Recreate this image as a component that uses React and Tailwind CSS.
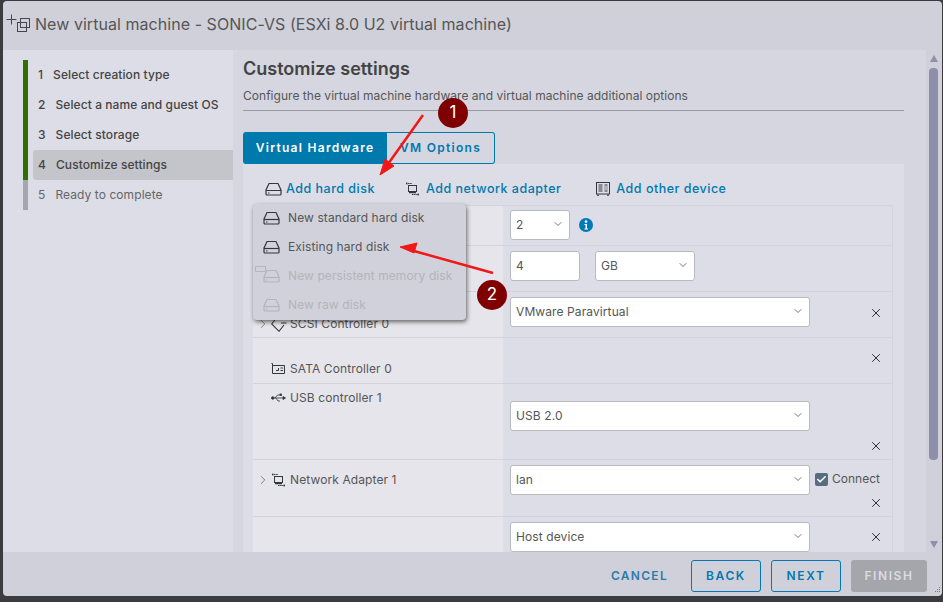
import React from 'react';
import { ChevronDown, ChevronRight, X, Check } from 'lucide-react';

const steps = [
  { n: 1, label: 'Select creation type', text: 'ml-[10px]' },
  { n: 2, label: 'Select a name and guest OS', text: 'ml-[10px]' },
  { n: 3, label: 'Select storage', text: 'ml-[10px]' },
  { n: 4, label: 'Customize settings', text: 'ml-[10px]', active: true },
  { n: 5, label: 'Ready to complete', text: 'ml-[10px]', todo: true },
];

function DiskIcon({ className = 'text-[#33363c]' }) {
  return (
    <svg width="17" height="14" viewBox="0 0 17 14" fill="none" stroke="currentColor" strokeWidth="1.2" className={`shrink-0 ${className}`}>
      <path d="M4 1.500h9l3 6.500v4a1 1 0 0 1-1 1H2a1 1 0 0 1-1-1V8z" />
      <path d="M1 8.500h15" />
      <path d="M3 11h1.500" />
    </svg>
  );
}

function NetIcon() {
  return (
    <svg width="15" height="14" viewBox="0 0 15 14" fill="none" stroke="#33363c" strokeWidth="1" className="shrink-0">
      <rect x="3.500" y="3.500" width="8" height="6" />
      <path d="M4 10.500h7" strokeWidth="1.500" />
      <path d="M1 1.500h6M1 1.500l1.500-1M1 1.500l1.500 1" strokeDasharray="1.500 0.600" />
      <path d="M7 12.500h7M14 12.500l-1.500-1M14 12.500l-1.500 1" strokeDasharray="1.500 0.600" />
    </svg>
  );
}

function OtherIcon() {
  return (
    <svg width="14" height="14" viewBox="0 0 14 14" fill="none" stroke="#33363c" strokeWidth="1" className="shrink-0">
      <rect x="0.500" y="0.500" width="13" height="11.500" />
      <path d="M2.500 3h4M2.500 5h4M2.500 7h4M2.500 9h4M8.500 3h3M8.500 5h1M10.500 5h1M8.500 7h1M10.500 7h1M8.500 9h3" />
      <path d="M2 12.500v1.500M12 12.500v1.500" strokeWidth="1.500" />
    </svg>
  );
}

function Select({ value, w = 'w-[300px]' }) {
  return (
    <div className={`${w} h-[30px] shrink-0 bg-white border border-[#b9b9c0] rounded-[3px] flex items-center justify-between pl-[5px] pr-[5px] text-[12px] tracking-[0.1px] text-[#565656]`}>
      <span>{value}</span>
      <ChevronDown size={12} strokeWidth={1.500} className="text-[#444] mb-[3px]" />
    </div>
  );
}

function Remove({ className = '' }) {
  return (
    <div className={`flex justify-end pr-[9px] ${className}`}>
      <X size={14} strokeWidth={1.600} className="text-[#222]" />
    </div>
  );
}

function Row({ h, label, control, side }) {
  return (
    <div className={`${h} flex border-b border-[#d2d3dc]`}>
      <div className="w-[251px] shrink-0 bg-[#e5e5eb] border-r border-[#dcdde6] text-[12px] tracking-[0.1px] text-[#565656]">{label}</div>
      <div className="flex-1 pl-[6px] flex">
        <div>{control}</div>
        <div className="flex-1">{side}</div>
      </div>
    </div>
  );
}

function DeviceLabel({ className, caret, icon, text }) {
  return (
    <div className={`flex items-center pl-[5px] ${className}`}>
      <span className="w-[9px] shrink-0">
        {caret && <ChevronRight size={14} strokeWidth={1.200} className="text-[#555] -ml-[2px]" />}
      </span>
      <span className="w-[23px] shrink-0 flex justify-center">{icon}</span>
      <span>{text}</span>
    </div>
  );
}

function MenuItem({ label, off, extra }) {
  return (
    <div className={`h-[29px] pb-[2px] flex items-center pl-[10px] gap-2 text-[12px] tracking-[0.1px] relative ${off ? 'text-[#b3b4bc]' : 'text-[#565656]'}`}>
      {extra && (
        <span className="absolute left-[2px] top-[4px] w-[11px] h-[6px] border border-[#b3b4bc] rounded-[1px] bg-[#d0d1da]" />
      )}
      <DiskIcon className={off ? 'text-[#b3b4bc]' : 'text-[#33363c]'} />
      <span>{label}</span>
    </div>
  );
}

function ToolButton({ icon, label, className = '' }) {
  return (
    <div className={`flex items-center gap-[4px] text-[12.5px] font-medium tracking-[0.5px] text-[#0079ad] ${className}`}>
      {icon}
      <span>{label}</span>
    </div>
  );
}

function Badge({ n, className }) {
  return (
    <div className={`absolute w-[30px] h-[30px] rounded-full bg-[#7f0000] text-white text-[17px] flex items-center justify-center ${className}`}>
      {n}
    </div>
  );
}

export default function App() {
  return (
    <div className="w-[943px] h-[602px] bg-[#3c3c40] overflow-hidden relative pl-[3px] pt-[1px] font-['Inter','Noto_Sans',sans-serif]">
      <div className="w-[939px] h-[595px] bg-[#d0d0da] rounded-[4px] flex flex-col overflow-hidden">
        {/* title bar */}
        <div className="h-[49px] shrink-0 flex items-center pb-[3px] pl-[2px] gap-[4px] text-[#565656]">
          <svg width="26" height="24" viewBox="0 0 26 24" fill="none" stroke="#44464c" strokeWidth="1" className="-mt-[3px]">
            <path d="M1.500 8.500h10M6.500 3.500v10" />
            <rect x="15.500" y="7.500" width="9" height="9" />
            <rect x="12.500" y="11.500" width="9" height="9" />
          </svg>
          <span className="text-[16px] tracking-[0.05px]">New virtual machine - SONIC-VS (ESXi 8.0 U2 virtual machine)</span>
        </div>

        <div className="flex-1 min-h-0 flex">
          {/* steps */}
          <div className="w-[230px] shrink-0 bg-[#dcdde6] pt-[10px] pl-[20px]">
            {steps.map((s) => (
              <div key={s.n} className={`h-[30px] flex border-l-[5px] ${s.todo ? 'border-[#a6a6ac]' : 'border-[#317000]'}`}>
                <div className={`flex-1 ml-[5px] pl-[5px] flex items-center text-[12px] tracking-[0.08px] rounded-l-[3px] ${s.active ? 'bg-[#c4c5cb]' : ''} ${s.todo ? 'text-[#666] font-normal' : 'text-[#444] font-medium'}`}>
                  <span>{s.n}</span>
                  <span className={s.text}>{s.label}</span>
                </div>
              </div>
            ))}
          </div>

          {/* scrolling content */}
          <div className="w-[693px] shrink-0 bg-[#d5d6e0] pl-[10px] pt-2 overflow-hidden">
            <div className="w-[661px]">
              <h1 className="text-[18px] leading-[22px] font-semibold text-[#444]">Customize settings</h1>
              <p className="mt-2 text-[12px] tracking-[0.03px] leading-4 text-[#565656]">Configure the virtual machine hardware and virtual machine additional options</p>
              <div className="mt-[6px] h-px bg-[#9a9aa2]" />
              <div className="mt-[21px] flex h-[32px] text-[12px] font-semibold tracking-[1.3px]">
                <div className="w-[144px] bg-[#0079ad] text-white rounded-l-[3px] flex items-center justify-center">Virtual Hardware</div>
                <div className="w-[108px] border border-l-0 border-[#0079ad] text-[#0079ad] rounded-r-[3px] flex items-center justify-center">VM Options</div>
              </div>
              <div className="bg-[#dcdde6] pl-[10px] pr-[11px]">
                <div className="h-[41px] pl-[12px] pt-[9px] flex items-center">
                  <ToolButton icon={<DiskIcon />} label="Add hard disk" className="mr-[30px]" />
                  <ToolButton icon={<NetIcon />} label="Add network adapter" className="!gap-[6px] mr-[35px]" />
                  <ToolButton icon={<OtherIcon />} label="Add other device" className="!gap-[6px]" />
                </div>
                <div className="border-t border-r border-[#d2d3dc]">
                  <Row h="h-[40px]" control={
                    <div className="pt-[4px] flex items-center gap-[9px] w-[300px]">
                      <Select value="2" w="w-[60px]" />
                      <svg width="14" height="14" viewBox="0 0 14 14">
                        <circle cx="7" cy="7" r="7" fill="#0079b8" />
                        <circle cx="7" cy="3.600" r="1.300" fill="#fff" />
                        <path d="M5.500 6h2.500v4.500h1v1H5.500v-1h1V7h-1z" fill="#fff" />
                      </svg>
                    </div>
                  } />
                  <Row h="h-[46px]" control={
                    <div className="pt-[5px] flex gap-[15px] w-[300px]">
                      <div className="w-[70px] h-[30px] bg-white border border-[#b9b9c0] rounded-[3px] flex items-center pl-[5px] text-[12px] text-[#565656]">4</div>
                      <Select value="GB" w="w-[100px]" />
                    </div>
                  } />
                  <Row h="h-[46px]"
                    label={<DeviceLabel className="pt-[23px]" caret text="SCSI Controller 0" icon={
                      <svg width="16" height="14" viewBox="0 0 16 14" fill="none" stroke="#33363c" strokeWidth="1.100" className="mt-[2px]">
                        <path d="M5 0.500L0.700 6L8 13.300L13 7M10 5h5.500" />
                      </svg>
                    } />}
                    control={<div className="pt-[5px]"><Select value="VMware Paravirtual" /></div>}
                    side={<Remove className="pt-[14px]" />}
                  />
                  <Row h="h-[46px]"
                    label={<DeviceLabel className="pt-[22px]" text="SATA Controller 0" icon={
                      <svg width="14" height="12" viewBox="0 0 14 12" fill="none" stroke="#33363c" strokeWidth="1" className="-ml-[2px]">
                        <path d="M0.500 0.500h1v10h12v-8h-12" />
                        <path d="M7.500 5v2.500H5M9.500 5h2.500M9.500 7.500h2.500" />
                      </svg>
                    } />}
                    control={<div className="w-[300px]" />}
                    side={<Remove className="pt-[13px]" />}
                  />
                  <Row h="h-[76px]"
                    label={<DeviceLabel className="pt-[5px]" text="USB controller 1" icon={
                      <svg width="15" height="10" viewBox="0 0 15 10" fill="#33363c" stroke="#33363c" strokeWidth="0.800">
                        <circle cx="1.800" cy="5" r="1.300" />
                        <path d="M2 5h12M4 5l2.500-3h3M5 5l2 3h2" fill="none" />
                        <path d="M12 3.500l2.500 1.500-2.500 1.500z" />
                        <rect x="9" y="1" width="1.500" height="1.500" />
                      </svg>
                    } />}
                    control={<div className="pt-[17px]"><Select value="USB 2.0" /></div>}
                    side={<Remove className="pt-[55px]" />}
                  />
                  <Row h="h-[57px]"
                    label={<DeviceLabel className="pt-[11px]" caret icon={<NetIcon />} text="Network Adapter 1" />}
                    control={<div className="pt-[5px]"><Select value="lan" /></div>}
                    side={
                      <div>
                        <div className="pt-[10px] pl-[5px] flex items-center gap-[4px] text-[12px] text-[#565656]">
                          <span className="w-[13px] h-[13px] bg-[#566d80] rounded-[2px] flex items-center justify-center">
                            <Check size={11} strokeWidth={3.500} className="text-white" />
                          </span>
                          <span>Connect</span>
                        </div>
                        <Remove className="pt-[8px]" />
                      </div>
                    }
                  />
                  <Row h="h-[46px]"
                    control={<div className="pt-[5px]"><Select value="Host device" /></div>}
                    side={<Remove className="pt-[13px]" />}
                  />
                </div>
              </div>
            </div>
          </div>

          {/* scrollbar */}
          <div className="flex-1 bg-[#cfd0da] pl-[3px] pr-[4px] pt-[5px] flex flex-col items-center">
            <div className="w-0 h-0 border-x-[4.500px] border-x-transparent border-b-[7px] border-b-[#8f8eab]" />
            <div className="w-[9px] h-[392px] mt-[6px] bg-[#8f8eab] rounded-[4px]" />
            <div className="mt-[81px] w-0 h-0 border-x-[4.500px] border-x-transparent border-t-[7px] border-t-[#8f8eab]" />
          </div>
        </div>

        {/* footer */}
        <div className="h-[44px] shrink-0 pt-2 pr-[15px] flex justify-end text-[12px] font-semibold tracking-[1.600px] relative">
          <div className="h-[32px] flex items-center mr-[23px] tracking-[1.300px] text-[#2f7ba8]">CANCEL</div>
          <div className="w-[70px] h-[32px] mr-[10px] border border-[#0079b8] rounded-[3px] text-[#0079ad] flex items-center justify-center">BACK</div>
          <div className="w-[70px] h-[32px] mr-[10px] border border-[#0079b8] rounded-[3px] text-[#0079ad] flex items-center justify-center">NEXT</div>
          <div className="w-[76px] h-[32px] bg-[#a5a5ac] rounded-[3px] text-[#dcdce0] flex items-center justify-center">FINISH</div>
          <svg width="8" height="8" viewBox="0 0 8 8" fill="#77777f" className="absolute right-[1px] bottom-[1px]">
            <rect x="6" y="0" width="1" height="1" /><rect x="4" y="2" width="1" height="1" /><rect x="6" y="2" width="1" height="1" />
            <rect x="2" y="4" width="1" height="1" /><rect x="4" y="4" width="1" height="1" /><rect x="6" y="4" width="1" height="1" />
          </svg>
        </div>
      </div>

      {/* open dropdown */}
      <div className="absolute left-[253px] top-[204px] w-[213px] h-[116px] bg-[#d0d1da] rounded-[4px] shadow-[1px_2px_4px_rgba(0,0,0,0.55)]">
        <MenuItem label="New standard hard disk" />
        <MenuItem label="Existing hard disk" />
        <MenuItem label="New persistent memory disk" off extra />
        <MenuItem label="New raw disk" off />
      </div>

      {/* screenshot annotations */}
      <svg width="943" height="602" viewBox="0 0 943 602" fill="none" className="absolute left-0 top-0 pointer-events-none">
        <path d="M423 115L388 164" stroke="#f01818" strokeWidth="2.500" />
        <path d="M380 175L385 159L394 166z" fill="#f01818" stroke="#f01818" strokeWidth="1" />
        <path d="M493 273L414 251" stroke="#f01818" strokeWidth="2.500" />
        <path d="M400 247L417 243L414 253z" fill="#f01818" stroke="#f01818" strokeWidth="1" />
      </svg>
      <Badge n="1" className="left-[438px] top-[98px]" />
      <Badge n="2" className="left-[477px] top-[280px]" />
    </div>
  );
}
